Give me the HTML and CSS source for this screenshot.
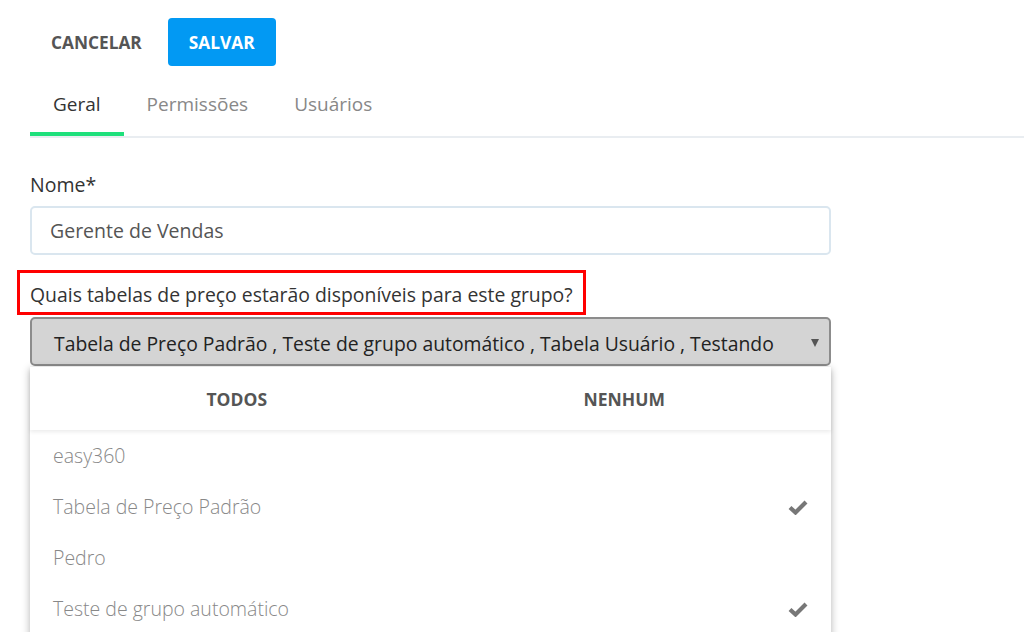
FILE: index.html
```html
<!DOCTYPE html>
<html>
  <head>
    <title>Grupo de usuários</title>
    <link rel="stylesheet" href="styles.css">
  </head>
  <body>
    <div class="actions">
      <button class="btn btn-cancel">Cancelar</button>
      <button class="btn btn-save">Salvar</button>
    </div>

    <ul class="tabs">
      <li class="tab active">Geral</li>
      <li class="tab">Permissões</li>
      <li class="tab">Usuários</li>
    </ul>

    <form class="group-form">
      <label class="field-label" for="nome">Nome*</label>
      <input id="nome" class="text-input" value="Gerente de Vendas" />

      <div class="question">
        <span class="question-label">Quais tabelas de preço estarão disponíveis para este grupo?</span>
      </div>

      <div class="multiselect">
        <div class="select-box">
          <span class="select-value">Tabela de Preço Padrão , Teste de grupo automático , Tabela Usuário , Testando</span>
          <span class="select-caret"></span>
        </div>
        <div class="dropdown">
          <div class="dropdown-head">
            <span>Todos</span>
            <span>Nenhum</span>
          </div>
          <ul class="options">
            <li class="option">easy360</li>
            <li class="option">Tabela de Preço Padrão
              <svg class="check" width="20" height="16" viewBox="0 0 20 16"><polyline points="2,8.5 7.5,13.5 18,3" fill="none" stroke="currentColor" stroke-width="4.2" /></svg>
            </li>
            <li class="option">Pedro</li>
            <li class="option">Teste de grupo automático
              <svg class="check" width="20" height="16" viewBox="0 0 20 16"><polyline points="2,8.5 7.5,13.5 18,3" fill="none" stroke="currentColor" stroke-width="4.2" /></svg>
            </li>
          </ul>
        </div>
      </div>
    </form>
  </body>
</html>
```

FILE: styles.css
```css
body {
  margin: 0;
  padding-left: 30px;
  font-family: "Open Sans", "Liberation Sans", sans-serif;
  color: #333;
  background: #fff;
  overflow: hidden;
}

.actions {
  display: flex;
  gap: 5px;
  padding-top: 18px;
}
.btn {
  height: 48px;
  padding: 0 21px;
  border: none;
  border-radius: 4px;
  font-family: inherit;
  font-size: 17.3px;
  font-weight: 700;
  text-transform: uppercase;
  background: none;
}
.btn-cancel {
  color: #555;
}
.btn-save {
  background: #0299f3;
  color: #fff;
}

.tabs {
  display: flex;
  list-style: none;
  margin: 10px 0 0;
  padding: 0;
  border-bottom: 2px solid #e9edf1;
}
.tab {
  padding: 16px 23px 16px;
  line-height: 24px;
  font-size: 19px;
  color: #888;
  border-bottom: 4px solid transparent;
}
.tab.active {
  color: #333;
  border-bottom-color: #1ee07b;
}

.group-form {
  width: 801px;
  padding-top: 35px;
}
.field-label {
  display: block;
  font-size: 19.5px;
  line-height: 24px;
  color: #333;
}
.text-input {
  display: block;
  box-sizing: border-box;
  width: 100%;
  height: 49px;
  margin-top: 9px;
  padding: 0 18px;
  border: 2px solid #dae6ef;
  border-radius: 5px;
  font-family: inherit;
  font-size: 19.5px;
  color: #555;
}

.question {
  margin-top: 15px;
}
.question-label {
  display: inline-block;
  margin-left: -13px;
  padding: 10px 10px 5px;
  border: 3px solid #f00;
  font-size: 19.4px;
  line-height: 24px;
  color: #333;
}

.multiselect {
  margin-top: 2px;
}
.select-box {
  display: flex;
  align-items: center;
  box-sizing: border-box;
  height: 49px;
  padding: 3px 10px 0 22px;
  background: #d4d4d4;
  border: 2px solid #8c8c8c;
  border-radius: 5px;
  font-size: 19.35px;
  color: #222;
}
.select-value {
  flex: 1;
  white-space: nowrap;
}
.select-caret {
  width: 0;
  height: 0;
  border-left: 4px solid transparent;
  border-right: 4px solid transparent;
  border-top: 8px solid #555;
}

.dropdown {
  margin-top: 1px;
  background: #fff;
  box-shadow: 0 2px 8px rgba(0, 0, 0, 0.3);
  height: 300px;
}
.dropdown-head {
  display: grid;
  grid-template-columns: 1fr 1fr;
  height: 63px;
  align-items: center;
  padding: 0 13px;
  box-shadow: 0 2px 4px rgba(0, 0, 0, 0.08);
  font-size: 17.5px;
  font-weight: 700;
  text-transform: uppercase;
  color: #555;
  text-align: center;
  position: relative;
}
.options {
  list-style: none;
  margin: 0;
  padding: 0;
}
.option {
  display: flex;
  align-items: center;
  justify-content: space-between;
  height: 51px;
  padding: 0 23px;
  font-size: 19.5px;
  font-weight: 300;
  color: #888;
}
.check {
  color: #777;
}
```
